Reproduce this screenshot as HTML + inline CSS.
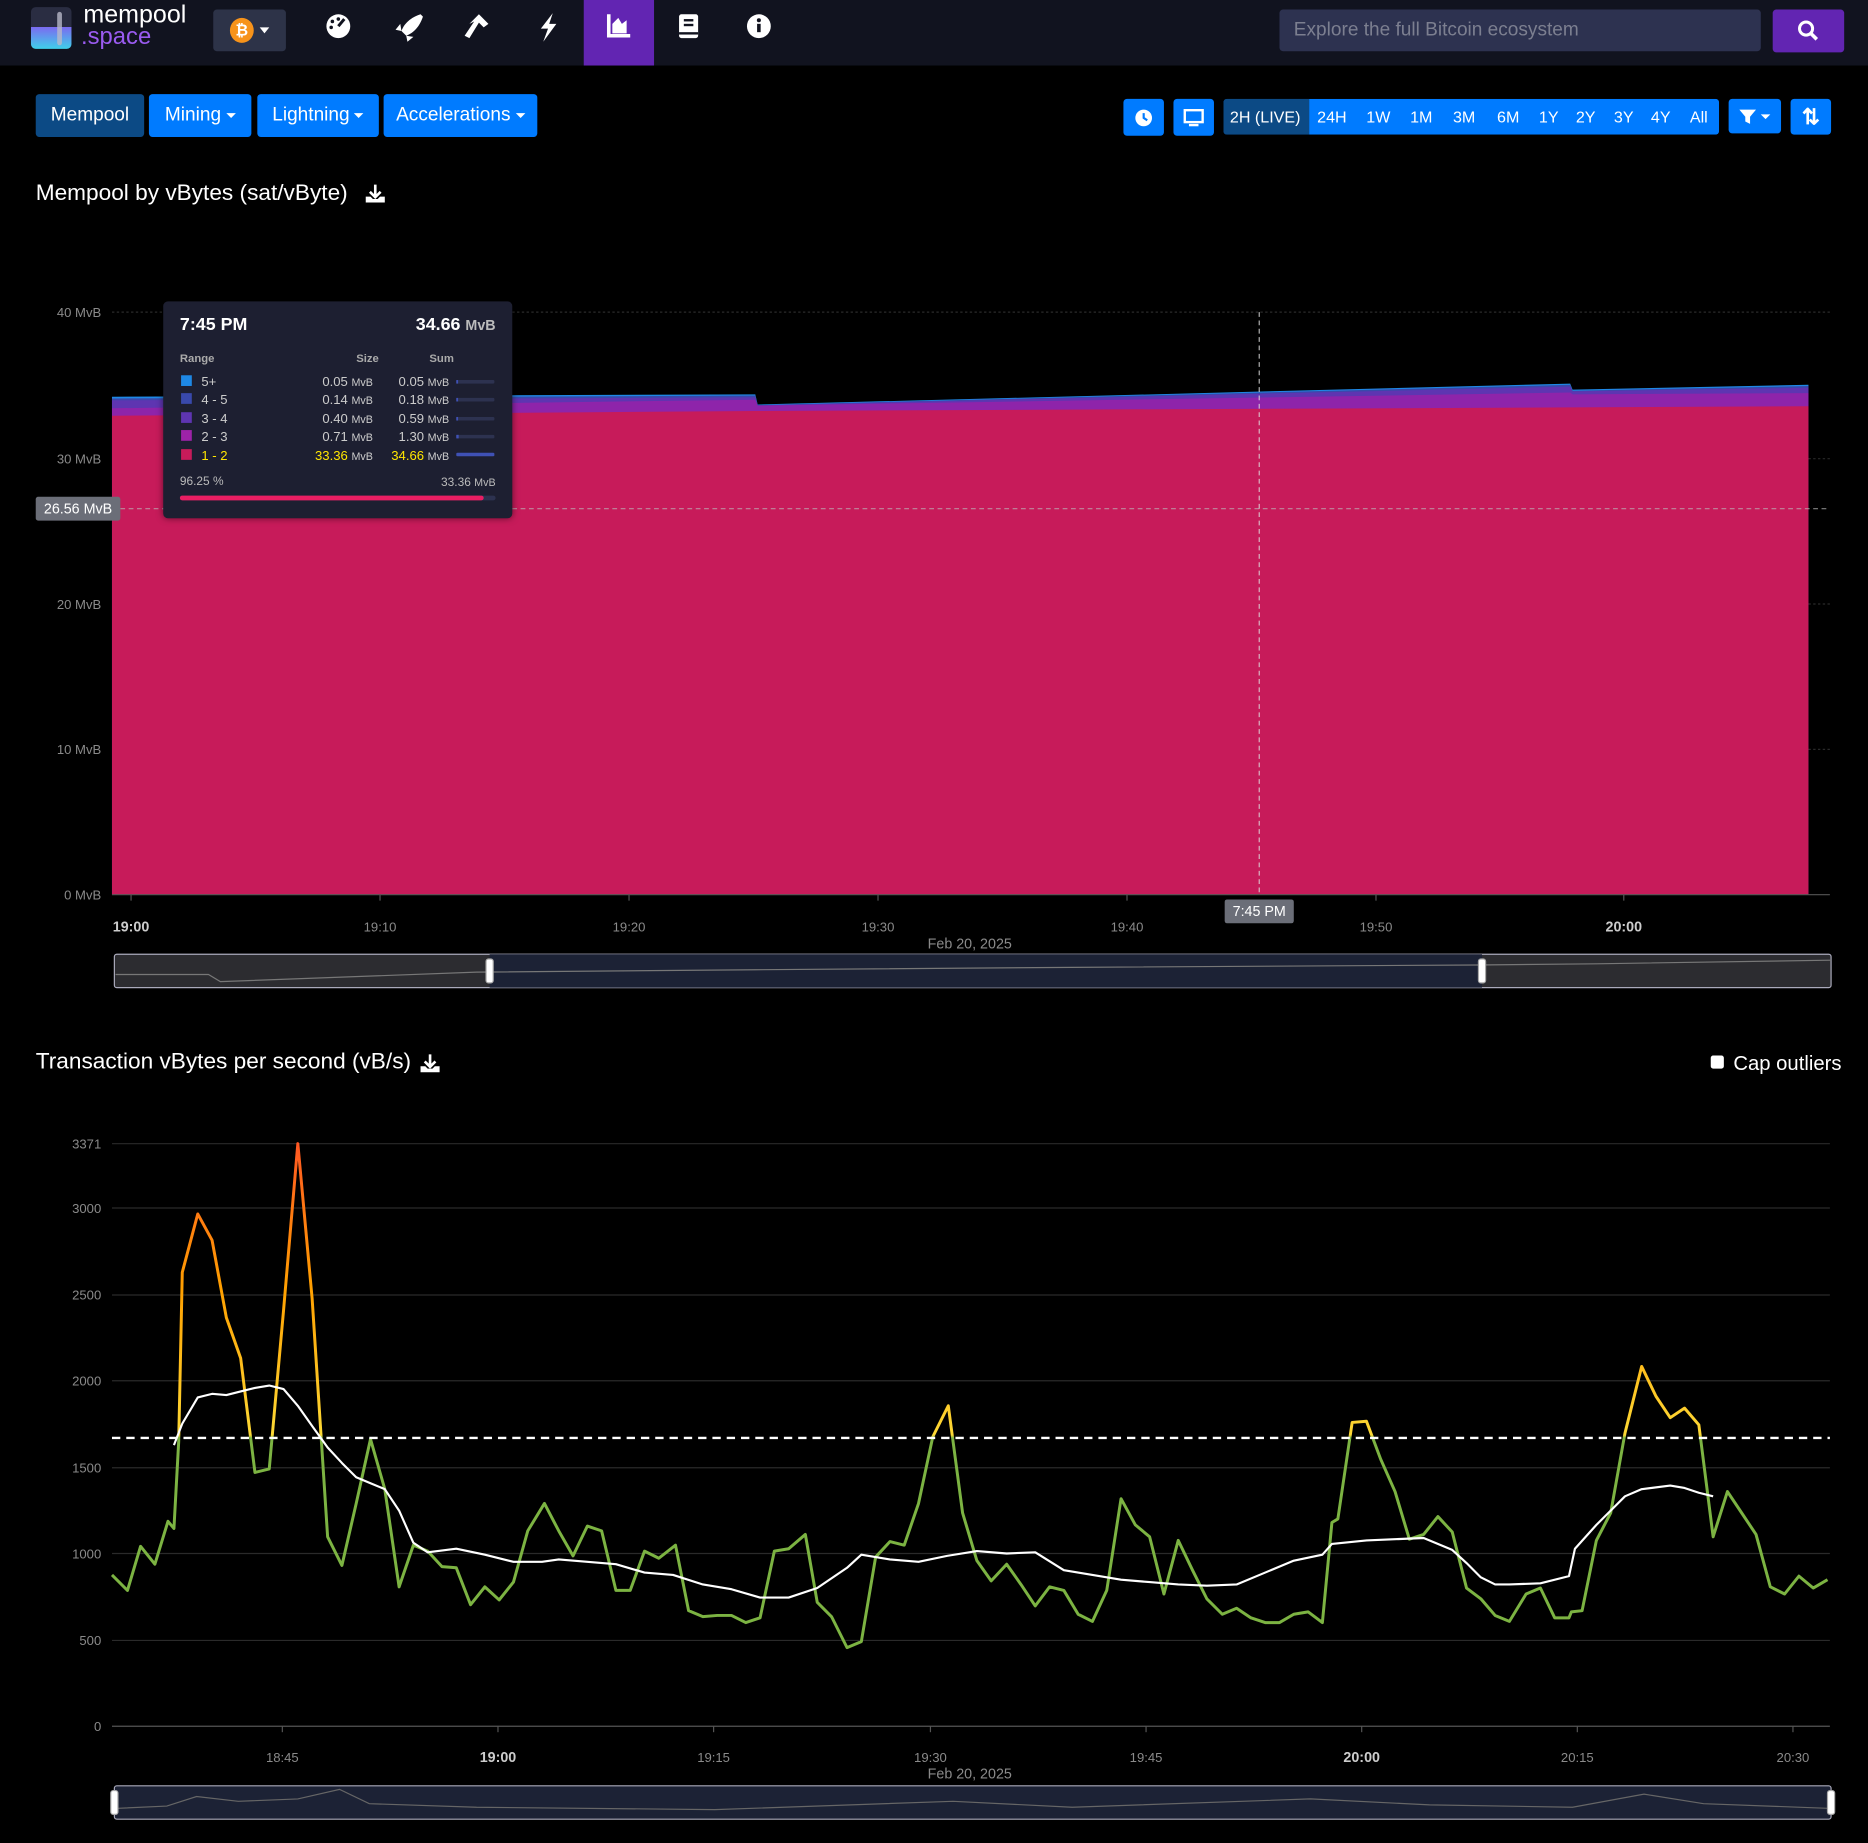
<!DOCTYPE html>
<html><head><meta charset="utf-8">
<style>
html,body{margin:0;padding:0;background:#000;width:1868px;height:1843px;overflow:hidden}
#w{position:absolute;left:0;top:0;width:1568px;height:1547px;transform:scale(1.19133);transform-origin:0 0;font-family:"Liberation Sans",sans-serif;color:#fff}
.a{position:absolute}
.hdr{left:0;top:0;width:1568px;height:55px;background:#11131f}
.btn{position:absolute;background:#007bff;border-radius:3px;color:#fff;font-size:16px;display:flex;align-items:center;justify-content:center}
.car:after{content:"";border-left:4px solid transparent;border-right:4px solid transparent;border-top:4px solid #fff;margin-left:4px}
svg text{font-family:"Liberation Sans",sans-serif}
</style></head><body><div id="w">
<div class="a hdr"></div>
<!-- logo -->
<div class="a" style="left:26px;top:6px;width:34px;height:35px;border-radius:4px;background:linear-gradient(#2a2d42 0 48%,#7b6bf0 48%,#3fd0ea 100%)"></div>
<div class="a" style="left:48px;top:10px;width:4px;height:28px;background:#b8b8c8;border-radius:2px;opacity:.8"></div>
<div class="a" style="left:70px;top:3px;font-size:21px;line-height:20px">mempool</div>
<div class="a" style="left:68px;top:21px;font-size:20px;line-height:20px;color:#9a5bf0">.space</div>
<div class="a" style="left:179px;top:8px;width:61px;height:35px;background:#2d3348;border-radius:3px"></div>
<div class="a" style="left:193px;top:15px;width:20px;height:21px;border-radius:50%;background:#f7931a;color:#fff;font-size:13px;font-weight:bold;text-align:center;line-height:21px">₿</div>
<div class="a" style="left:218px;top:23px;border-left:4px solid transparent;border-right:4px solid transparent;border-top:5px solid #fff"></div>
<div class="a" style="left:490px;top:0;width:59px;height:55px;background:#6225b2"></div>
<svg class="a" style="left:270px;top:8px" width="390" height="30" viewBox="0 0 390 30">
<circle cx="14" cy="14" r="10" fill="#fff"/><path d="M14 14 L19 8" stroke="#11131f" stroke-width="2.5"/><circle cx="9" cy="10" r="1.5" fill="#11131f"/><circle cx="14" cy="8" r="1.5" fill="#11131f"/><circle cx="8" cy="15" r="1.5" fill="#11131f"/>
<path d="M83 4 C77 6 70 10 67 18 L71 22 C79 19 83 12 85 6 Z M67 18 L62 17 L66 12 Z M71 22 L72 27 L77 23 Z" fill="#fff"/>
<path d="M124 12 L132 4 L140 12 L136 15 L132 11 L124 24 L120 22 L128 10 Z" fill="#fff"/>
<path d="M194 3 L184 16 L190 16 L186 27 L197 12 L191 12 Z" fill="#fff"/>
<path d="M241 4 L241 22 L259 22" stroke="#fff" stroke-width="3" fill="none"/><path d="M244 20 L244 12 L249 7 L252 12 L256 9 L256 20 Z" fill="#fff"/>
<rect x="300" y="4" width="16" height="20" rx="2" fill="#fff"/><rect x="304" y="8" width="8" height="2" fill="#11131f"/><rect x="304" y="12" width="8" height="2" fill="#11131f"/><rect x="300" y="19" width="16" height="2" fill="#11131f"/>
<circle cx="367" cy="14" r="10" fill="#fff"/><rect x="365.5" y="12" width="3" height="7" fill="#11131f"/><circle cx="367" cy="9" r="1.7" fill="#11131f"/>
</svg>
<div class="a" style="left:1074px;top:8px;width:404px;height:35px;background:#2d3250;border-radius:3px;color:#7c7f90;font-size:16px;line-height:35px;text-indent:12px">Explore the full Bitcoin ecosystem</div>
<div class="a" style="left:1488px;top:8px;width:60px;height:36px;background:#6225b2;border-radius:3px"></div>
<svg class="a" style="left:1508px;top:16px" width="20" height="20"><circle cx="8" cy="8" r="5.5" stroke="#fff" stroke-width="2.5" fill="none"/><path d="M12 12 L17 17" stroke="#fff" stroke-width="3"/></svg>
<!-- tabs -->
<div class="btn" style="left:30px;top:79px;width:91px;height:36px;background:#0c4a85">Mempool</div>
<div class="btn car" style="left:125px;top:79px;width:86px;height:36px">Mining</div>
<div class="btn car" style="left:216px;top:79px;width:102px;height:36px">Lightning</div>
<div class="btn car" style="left:322px;top:79px;width:129px;height:36px">Accelerations</div>
<div class="btn" style="left:943px;top:83px;width:34px;height:31px"><svg width="16" height="16"><circle cx="8" cy="8" r="7" fill="#fff"/><path d="M8 4 V8 L11 10" stroke="#007bff" stroke-width="1.8" fill="none"/></svg></div>
<div class="btn" style="left:985px;top:83px;width:34px;height:31px"><svg width="18" height="16"><rect x="1.5" y="1.5" width="15" height="10" fill="none" stroke="#fff" stroke-width="2"/><rect x="5" y="13" width="8" height="2" fill="#fff"/></svg></div>
<svg class="a" style="left:1027px;top:83px" width="416" height="30">
<rect width="416" height="30" rx="3" fill="#007bff"/><path d="M3 0 H72 V30 H3 A3 3 0 0 1 0 27 V3 A3 3 0 0 1 3 0Z" fill="#0c4a85"/>
<g fill="#fff" font-size="13.5" text-anchor="middle">
<text x="35" y="20">2H (LIVE)</text><text x="91" y="20">24H</text><text x="130" y="20">1W</text><text x="166" y="20">1M</text><text x="202" y="20">3M</text><text x="239" y="20">6M</text><text x="273" y="20">1Y</text><text x="304" y="20">2Y</text><text x="336" y="20">3Y</text><text x="367" y="20">4Y</text><text x="399" y="20">All</text>
</g></svg>
<div class="btn car" style="left:1451px;top:83px;width:44px;height:29px"><svg width="14" height="14"><path d="M0 1 H14 L9 7 V13 L5 11 V7 Z" fill="#fff"/></svg></div>
<div class="btn" style="left:1503px;top:83px;width:34px;height:30px;font-size:18px;font-weight:bold">⇅</div>
<!-- titles -->
<div class="a" style="left:30px;top:152px;font-size:19px">Mempool by vBytes (sat/vByte)</div>
<svg class="a" style="left:306px;top:154px" width="18" height="18"><path d="M9 1 V11 M4.5 7 L9 11.5 L13.5 7" stroke="#fff" stroke-width="2.2" fill="none"/><path d="M1 11 V16 H17 V11 H13 L11 13 H7 L5 11 Z" fill="#fff"/></svg>
<div class="a" style="left:30px;top:881px;font-size:19px">Transaction vBytes per second (vB/s)</div>
<svg class="a" style="left:352px;top:884px" width="18" height="18"><path d="M9 1 V11 M4.5 7 L9 11.5 L13.5 7" stroke="#fff" stroke-width="2.2" fill="none"/><path d="M1 11 V16 H17 V11 H13 L11 13 H7 L5 11 Z" fill="#fff"/></svg>
<div class="a" style="left:1436px;top:886px;width:11px;height:11px;background:#fff;border-radius:2px"></div>
<div class="a" style="left:1455px;top:883px;font-size:17px">Cap outliers</div>

<svg class="a" style="left:0;top:0" width="1568" height="1547">
<g stroke="#2a2a2a" stroke-width="1" stroke-dasharray="2 2">
<line x1="94" y1="262" x2="1536" y2="262"/><line x1="94" y1="385" x2="1536" y2="385"/><line x1="94" y1="507" x2="1536" y2="507"/><line x1="94" y1="629" x2="1536" y2="629"/>
</g>
<g fill="#8a8a8a" font-size="11" text-anchor="end">
<text x="85" y="266">40 MvB</text><text x="85" y="389">30 MvB</text><text x="85" y="511">20 MvB</text><text x="85" y="633">10 MvB</text><text x="85" y="755">0 MvB</text>
</g>
<polygon fill="#1e88e5" points="94,333 634,331 636,339.5 1318,322 1320,327 1518,323 1518,751 94,751"/>
<polygon fill="#3949ab" points="94,334.5 634,332 636,340 1318,323 1320,328 1518,324 1518,751 94,751"/>
<polygon fill="#5e35b1" points="94,336 634,333.5 636,340.3 1318,324.5 1320,328.5 1518,325.5 1518,751 94,751"/>
<polygon fill="#8e24aa" points="94,342.7 634,335.5 636,340.5 1318,329.5 1320,331 1518,330 1518,751 94,751"/>
<polygon fill="#c71b5a" points="94,349 634,345 636,345 1318,342 1320,342 1518,341 1518,751 94,751"/>
<line x1="94" y1="751" x2="1536" y2="751" stroke="#555"/>
<g stroke="#555"><line x1="110" y1="751" x2="110" y2="756"/><line x1="319" y1="751" x2="319" y2="756"/><line x1="528" y1="751" x2="528" y2="756"/><line x1="737" y1="751" x2="737" y2="756"/><line x1="946" y1="751" x2="946" y2="756"/><line x1="1155" y1="751" x2="1155" y2="756"/><line x1="1363" y1="751" x2="1363" y2="756"/></g>
<line x1="94" y1="427" x2="1536" y2="427" stroke="#bbb" stroke-dasharray="4 3" opacity=".7"/>
<line x1="1057" y1="262" x2="1057" y2="751" stroke="#ddd" stroke-dasharray="4 3" opacity=".8"/>
<rect x="30" y="417" width="71" height="20" rx="2" fill="#6b6e78"/><text x="65.5" y="431" fill="#fff" font-size="12" text-anchor="middle">26.56 MvB</text>
<rect x="1028" y="755" width="58" height="20" rx="2" fill="#6b6e78"/><text x="1057" y="769" fill="#fff" font-size="12" text-anchor="middle">7:45 PM</text>
<g fill="#8a8a8a" font-size="11" text-anchor="middle">
<text x="110" y="782" font-weight="bold" fill="#ccc" font-size="12">19:00</text><text x="319" y="782">19:10</text><text x="528" y="782">19:20</text><text x="737" y="782">19:30</text><text x="946" y="782">19:40</text><text x="1155" y="782">19:50</text><text x="1363" y="782" font-weight="bold" fill="#ccc" font-size="12">20:00</text>
<text x="814" y="796" font-size="12">Feb 20, 2025</text>
</g>
<!-- slider1 -->
<rect x="96" y="801" width="1441" height="28" fill="#2c2c30" stroke="#aab" rx="2"/>
<rect x="411" y="801" width="833" height="28" fill="#1c2235"/>
<polyline points="97,818 175,818 185,824 400,816 634,814 900,812 1240,810 1340,809 1537,806" fill="none" stroke="#777" stroke-width="1"/>
<rect x="408" y="805" width="6" height="20" rx="2" fill="#fff" stroke="#aaa"/><rect x="1241" y="805" width="6" height="20" rx="2" fill="#fff" stroke="#aaa"/>

<!-- chart 2 -->
<g stroke="#2a2a2a" stroke-width="1">
<line x1="94" y1="960" x2="1536" y2="960"/><line x1="94" y1="1014" x2="1536" y2="1014"/><line x1="94" y1="1087" x2="1536" y2="1087"/><line x1="94" y1="1159" x2="1536" y2="1159"/><line x1="94" y1="1232" x2="1536" y2="1232"/><line x1="94" y1="1304" x2="1536" y2="1304"/><line x1="94" y1="1377" x2="1536" y2="1377"/>
</g>
<line x1="94" y1="1449" x2="1536" y2="1449" stroke="#555"/>
<g fill="#8a8a8a" font-size="11" text-anchor="end">
<text x="85" y="964">3371</text><text x="85" y="1018">3000</text><text x="85" y="1091">2500</text><text x="85" y="1163">2000</text><text x="85" y="1236">1500</text><text x="85" y="1308">1000</text><text x="85" y="1381">500</text><text x="85" y="1453">0</text>
</g>
<g fill="#8a8a8a" font-size="11" text-anchor="middle">
<text x="237" y="1479">18:45</text><text x="418" y="1479" font-weight="bold" fill="#ccc" font-size="12">19:00</text><text x="599" y="1479">19:15</text><text x="781" y="1479">19:30</text><text x="962" y="1479">19:45</text><text x="1143" y="1479" font-weight="bold" fill="#ccc" font-size="12">20:00</text><text x="1324" y="1479">20:15</text><text x="1505" y="1479">20:30</text>
<text x="814" y="1493" font-size="12">Feb 20, 2025</text>
</g>
<g stroke="#555"><line x1="237" y1="1449" x2="237" y2="1454"/><line x1="418" y1="1449" x2="418" y2="1454"/><line x1="599" y1="1449" x2="599" y2="1454"/><line x1="781" y1="1449" x2="781" y2="1454"/><line x1="962" y1="1449" x2="962" y2="1454"/><line x1="1143" y1="1449" x2="1143" y2="1454"/><line x1="1324" y1="1449" x2="1324" y2="1454"/><line x1="1505" y1="1449" x2="1505" y2="1454"/></g>
<defs><linearGradient id="g" gradientUnits="userSpaceOnUse" x1="0" y1="1449" x2="0" y2="960">
<stop offset="0" stop-color="#7cb342"/><stop offset="0.495" stop-color="#7cb342"/><stop offset="0.5" stop-color="#fdd835"/><stop offset="0.75" stop-color="#ffa000"/><stop offset="1" stop-color="#ff5722"/></linearGradient></defs>
<polyline fill="none" stroke="url(#g)" stroke-width="2.5" stroke-linejoin="round" points="94,1322 107,1335 118,1298 130,1313 141,1277 146,1283 150,1210 153,1068 166,1019 178,1041 190,1106 202,1140 214,1236 226,1233 238,1100 250,960 262,1090 275,1290 287,1314 299,1262 311,1208 323,1250 335,1332 347,1297 359,1302 371,1315 383,1316 395,1347 407,1332 419,1343 431,1328 443,1285 457,1262 469,1285 481,1306 493,1281 505,1285 517,1335 529,1335 541,1302 553,1308 567,1297 578,1352 590,1357 602,1356 614,1356 626,1362 638,1358 650,1302 662,1300 676,1288 686,1345 698,1357 711,1383 723,1378 735,1307 747,1294 759,1297 771,1262 783,1206 796,1180 808,1270 820,1310 832,1327 845,1313 857,1330 869,1348 881,1332 893,1335 905,1355 917,1361 929,1335 941,1258 953,1280 965,1290 977,1338 989,1293 1001,1318 1013,1342 1026,1355 1038,1350 1050,1358 1062,1362 1074,1362 1086,1355 1098,1353 1110,1362 1118,1278 1123,1275 1135,1194 1147,1193 1159,1225 1171,1252 1183,1292 1195,1288 1207,1273 1219,1286 1231,1333 1243,1342 1255,1356 1267,1361 1281,1338 1293,1333 1305,1358 1317,1358 1319,1353 1328,1352 1340,1293 1352,1270 1364,1203 1378,1147 1390,1172 1402,1190 1414,1182 1426,1196 1438,1290 1450,1252 1462,1270 1474,1288 1486,1332 1498,1338 1510,1323 1522,1333 1534,1326"/>
<polyline fill="none" stroke="#fff" stroke-width="1.8" stroke-linejoin="round" points="146,1213 153,1195 166,1173 178,1170 190,1171 202,1168 214,1165 226,1163 238,1166 250,1180 262,1197 275,1215 287,1228 299,1240 311,1245 323,1250 335,1268 347,1295 359,1303 383,1300 407,1305 431,1311 455,1311 469,1309 493,1311 517,1313 541,1320 565,1322 590,1330 614,1334 638,1341 662,1341 686,1333 711,1316 723,1305 747,1309 771,1311 795,1306 820,1302 845,1304 869,1303 893,1318 917,1322 941,1326 965,1328 989,1330 1013,1331 1038,1330 1062,1320 1086,1310 1110,1305 1118,1296 1147,1293 1171,1292 1195,1291 1219,1301 1231,1312 1243,1324 1255,1330 1267,1330 1293,1329 1317,1323 1322,1300 1340,1280 1352,1268 1364,1256 1378,1250 1402,1247 1414,1249 1426,1253 1438,1256"/>
<line x1="94" y1="1207" x2="1536" y2="1207" stroke="#fff" stroke-width="2" stroke-dasharray="7 5"/>
<!-- slider2 -->
<rect x="96" y="1499" width="1441" height="28" fill="#1c2235" stroke="#aab" rx="2"/>
<polyline points="97,1518 140,1516 165,1508 200,1512 250,1510 285,1502 310,1514 400,1517 600,1519 800,1512 900,1517 1100,1510 1200,1515 1320,1517 1380,1506 1430,1514 1537,1518" fill="none" stroke="#666" stroke-width="1"/>
<rect x="93" y="1503" width="6" height="20" rx="2" fill="#fff" stroke="#aaa"/><rect x="1534" y="1503" width="6" height="20" rx="2" fill="#fff" stroke="#aaa"/>
</svg>

<!-- tooltip -->
<div class="a" style="left:137px;top:253px;width:293px;height:182px;background:#1d1f31;border-radius:4px;box-shadow:0 0 6px rgba(0,0,0,.5)"></div>
<svg class="a" style="left:137px;top:253px" width="293" height="182">
<text x="14" y="24" fill="#fff" font-size="15" font-weight="bold">7:45 PM</text>
<text x="279" y="24" fill="#fff" font-size="15" font-weight="bold" text-anchor="end">34.66 <tspan fill="#bbb" font-size="12">MvB</tspan></text>
<g fill="#aaa" font-size="9.5" font-weight="bold"><text x="14" y="51">Range</text><text x="181" y="51" text-anchor="end">Size</text><text x="244" y="51" text-anchor="end">Sum</text></g>
<g font-size="11" fill="#ccc">
<rect x="15" y="62" width="9" height="9" fill="#1e88e5"/><text x="32" y="71">5+</text><text x="176" y="71" text-anchor="end">0.05 <tspan font-size="9">MvB</tspan></text><text x="240" y="71" text-anchor="end">0.05 <tspan font-size="9">MvB</tspan></text>
<rect x="15" y="77" width="9" height="9" fill="#3949ab"/><text x="32" y="86">4 - 5</text><text x="176" y="86" text-anchor="end">0.14 <tspan font-size="9">MvB</tspan></text><text x="240" y="86" text-anchor="end">0.18 <tspan font-size="9">MvB</tspan></text>
<rect x="15" y="93" width="9" height="9" fill="#5e35b1"/><text x="32" y="102">3 - 4</text><text x="176" y="102" text-anchor="end">0.40 <tspan font-size="9">MvB</tspan></text><text x="240" y="102" text-anchor="end">0.59 <tspan font-size="9">MvB</tspan></text>
<rect x="15" y="108" width="9" height="9" fill="#9d23a8"/><text x="32" y="117">2 - 3</text><text x="176" y="117" text-anchor="end">0.71 <tspan font-size="9">MvB</tspan></text><text x="240" y="117" text-anchor="end">1.30 <tspan font-size="9">MvB</tspan></text>
<rect x="15" y="124" width="9" height="9" fill="#c71b5a"/><text x="32" y="133" fill="#ffe600">1 - 2</text><text x="176" y="133" text-anchor="end"><tspan fill="#ffe600">33.36</tspan> <tspan font-size="9">MvB</tspan></text><text x="240" y="133" text-anchor="end"><tspan fill="#ffe600">34.66</tspan> <tspan font-size="9">MvB</tspan></text>
</g>
<g fill="#2d3250"><rect x="246" y="66" width="32" height="3" rx="1"/><rect x="246" y="81" width="32" height="3" rx="1"/><rect x="246" y="97" width="32" height="3" rx="1"/><rect x="246" y="112" width="32" height="3" rx="1"/></g>
<rect x="246" y="127" width="32" height="3" rx="1" fill="#3f51b5"/>
<g fill="#3f51b5"><rect x="246" y="66" width="1.5" height="3"/><rect x="246" y="81" width="1.5" height="3"/><rect x="246" y="97" width="1.5" height="3"/><rect x="246" y="112" width="2" height="3"/></g>
<text x="14" y="154" fill="#bbb" font-size="10">96.25 %</text><text x="279" y="155" fill="#bbb" font-size="10" text-anchor="end">33.36 <tspan font-size="9">MvB</tspan></text>
<rect x="14" y="163" width="265" height="4" rx="2" fill="#2d3250"/><rect x="14" y="163" width="255" height="4" rx="2" fill="#e91e63"/>
</svg>
</div></body></html>
